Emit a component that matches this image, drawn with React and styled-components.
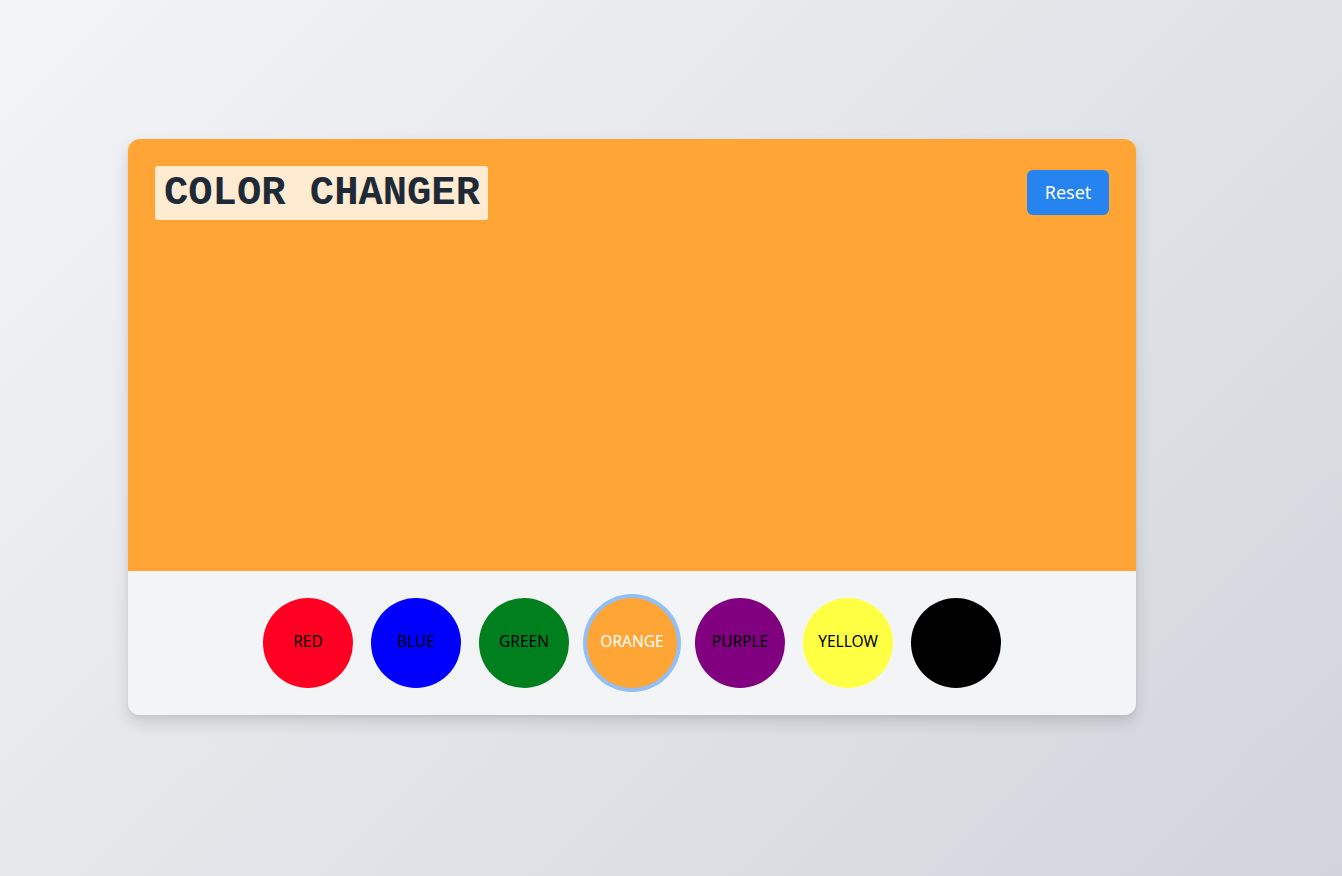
import React, { useState } from 'react';
import styled, { createGlobalStyle } from 'styled-components';

const GlobalStyle = createGlobalStyle`
  html, body {
    margin: 0;
    padding: 0;
  }
  body {
    min-height: 100vh;
    background: linear-gradient(135deg, #f3f4f6 0%, #d1d5db 100%);
    font-family: "Noto Sans", "Open Sans", sans-serif;
  }
`;

const COLORS = [
  { name: 'red', bg: '#ff0022', text: '#000' },
  { name: 'blue', bg: '#0000ff', text: '#000' },
  { name: 'green', bg: '#007f1f', text: '#000' },
  { name: 'orange', bg: '#ffa535', text: '#fff' },
  { name: 'purple', bg: '#800080', text: '#000' },
  { name: 'yellow', bg: '#ffff44', text: '#000' },
  { name: 'black', bg: '#000000', text: '#000' },
];

const Page = styled.div`
  min-height: 100vh;
  padding: 139px 0 0 128px;
  box-sizing: border-box;
`;

const Card = styled.div`
  width: 1008px;
  border-radius: 12px;
  overflow: hidden;
  box-shadow: 0 8px 16px rgba(0, 0, 0, 0.12), 0 2px 4px rgba(0, 0, 0, 0.06);
  background: #f3f4f6;
`;

const Stage = styled.div`
  height: 432px;
  box-sizing: border-box;
  padding: 27px;
  display: flex;
  justify-content: space-between;
  align-items: flex-start;
  background: ${p => p.$bg};
`;

const Title = styled.h1`
  margin: 0;
  padding: 5px 8px 5px 9px;
  border-radius: 3px;
  background: rgba(255, 255, 255, 0.78);
  color: #1f2a37;
  font-family: "Liberation Mono", monospace;
  font-weight: 700;
  font-size: 40.5px;
  line-height: 44px;
`;

const ResetButton = styled.button`
  margin-top: 4px;
  width: 82px;
  height: 45px;
  border: none;
  border-radius: 6px;
  background: #2584f0;
  color: #fff;
  font-family: "Noto Sans", "Open Sans", sans-serif;
  font-size: 18px;
  padding: 0 0 2px;
  cursor: pointer;
`;

const Palette = styled.div`
  height: 144px;
  display: flex;
  justify-content: center;
  align-items: center;
  gap: 18px;
  background: #f3f4f6;
`;

const Swatch = styled.button`
  width: 90px;
  height: 90px;
  border-radius: 50%;
  border: none;
  padding: 0 0 5px;
  background: ${p => p.$bg};
  color: ${p => p.$fg};
  font-family: "Noto Sans", "Open Sans", sans-serif;
  font-size: 15.5px;
  line-height: 20px;
  text-transform: uppercase;
  cursor: pointer;
  box-shadow: ${p => (p.$active ? '0 0 0 4px #93bff5' : 'none')};
`;

export default function App() {
  const [active, setActive] = useState('orange');
  const current = COLORS.find(c => c.name === active);

  return (
    <Page>
      <GlobalStyle />
      <Card>
        <Stage $bg={current ? current.bg : '#ffffff'}>
          <Title>COLOR CHANGER</Title>
          <ResetButton onClick={() => setActive('')}>Reset</ResetButton>
        </Stage>
        <Palette>
          {COLORS.map(c => (
            <Swatch
              key={c.name}
              $bg={c.bg}
              $fg={c.text}
              $active={c.name === active}
              onClick={() => setActive(c.name)}
            >
              {c.name}
            </Swatch>
          ))}
        </Palette>
      </Card>
    </Page>
  );
}
